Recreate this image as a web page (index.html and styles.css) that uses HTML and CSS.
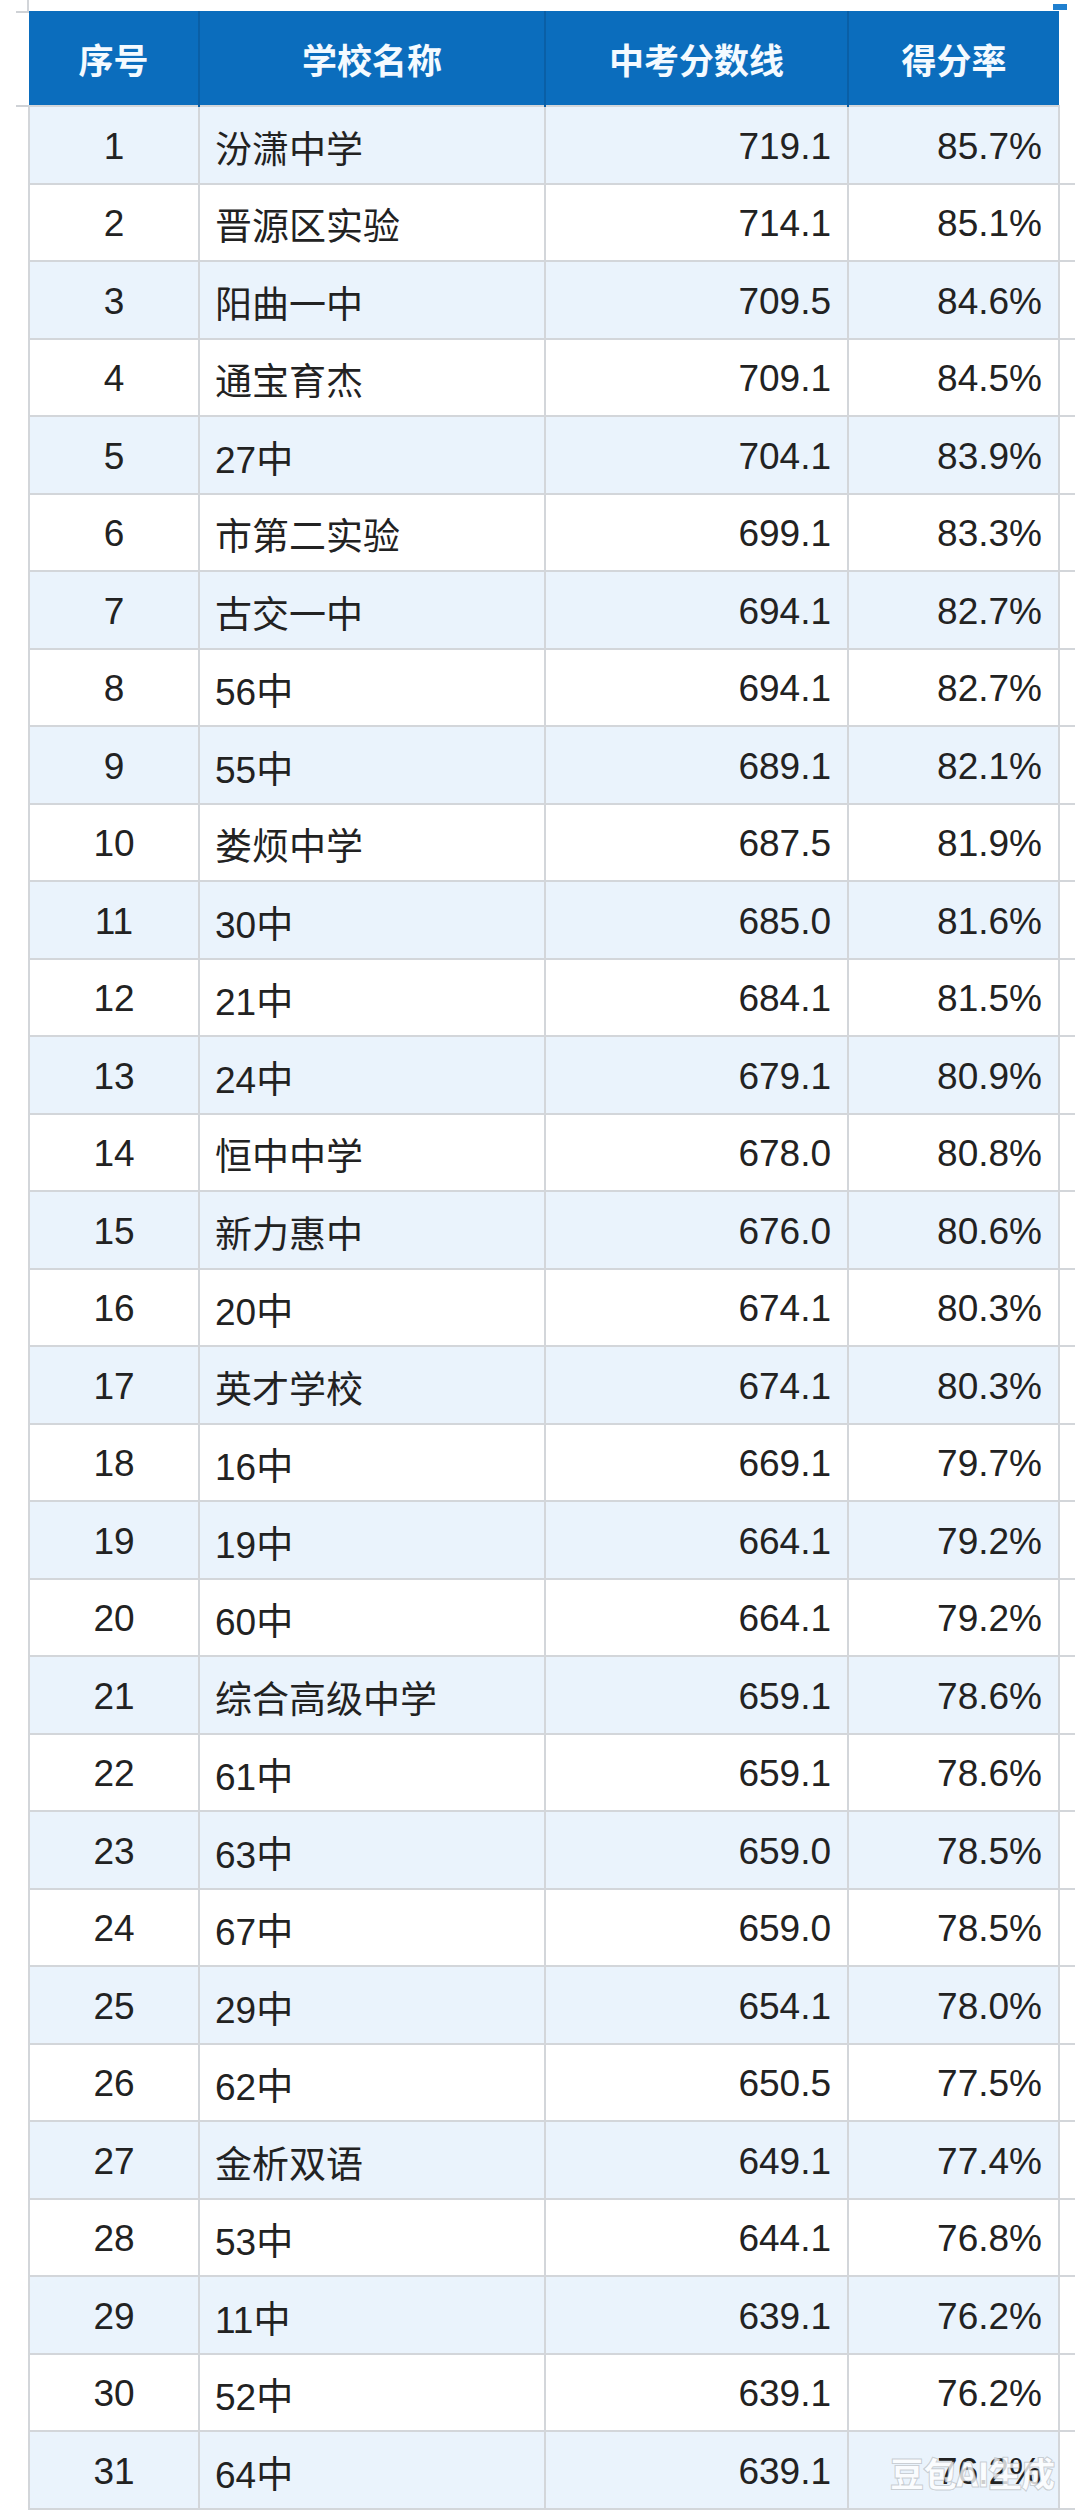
FILE: index.html
```html
<!DOCTYPE html>
<html lang="zh-CN">
<head>
<meta charset="utf-8">
<title>中考分数线</title>
<link rel="stylesheet" href="styles.css">
</head>
<body>
<div class="sheet">
  <span class="corner-mark"></span>
  <table class="score-table">
    <thead>
      <tr><th class="c-no">序号</th><th class="c-name">学校名称</th><th class="c-score">中考分数线</th><th class="c-rate">得分率</th></tr>
    </thead>
    <tbody>
      <tr><td>1</td><td>汾潇中学</td><td>719.1</td><td>85.7%</td></tr>
      <tr><td>2</td><td>晋源区实验</td><td>714.1</td><td>85.1%</td></tr>
      <tr><td>3</td><td>阳曲一中</td><td>709.5</td><td>84.6%</td></tr>
      <tr><td>4</td><td>通宝育杰</td><td>709.1</td><td>84.5%</td></tr>
      <tr><td>5</td><td>27中</td><td>704.1</td><td>83.9%</td></tr>
      <tr><td>6</td><td>市第二实验</td><td>699.1</td><td>83.3%</td></tr>
      <tr><td>7</td><td>古交一中</td><td>694.1</td><td>82.7%</td></tr>
      <tr><td>8</td><td>56中</td><td>694.1</td><td>82.7%</td></tr>
      <tr><td>9</td><td>55中</td><td>689.1</td><td>82.1%</td></tr>
      <tr><td>10</td><td>娄烦中学</td><td>687.5</td><td>81.9%</td></tr>
      <tr><td>11</td><td>30中</td><td>685.0</td><td>81.6%</td></tr>
      <tr><td>12</td><td>21中</td><td>684.1</td><td>81.5%</td></tr>
      <tr><td>13</td><td>24中</td><td>679.1</td><td>80.9%</td></tr>
      <tr><td>14</td><td>恒中中学</td><td>678.0</td><td>80.8%</td></tr>
      <tr><td>15</td><td>新力惠中</td><td>676.0</td><td>80.6%</td></tr>
      <tr><td>16</td><td>20中</td><td>674.1</td><td>80.3%</td></tr>
      <tr><td>17</td><td>英才学校</td><td>674.1</td><td>80.3%</td></tr>
      <tr><td>18</td><td>16中</td><td>669.1</td><td>79.7%</td></tr>
      <tr><td>19</td><td>19中</td><td>664.1</td><td>79.2%</td></tr>
      <tr><td>20</td><td>60中</td><td>664.1</td><td>79.2%</td></tr>
      <tr><td>21</td><td>综合高级中学</td><td>659.1</td><td>78.6%</td></tr>
      <tr><td>22</td><td>61中</td><td>659.1</td><td>78.6%</td></tr>
      <tr><td>23</td><td>63中</td><td>659.0</td><td>78.5%</td></tr>
      <tr><td>24</td><td>67中</td><td>659.0</td><td>78.5%</td></tr>
      <tr><td>25</td><td>29中</td><td>654.1</td><td>78.0%</td></tr>
      <tr><td>26</td><td>62中</td><td>650.5</td><td>77.5%</td></tr>
      <tr><td>27</td><td>金析双语</td><td>649.1</td><td>77.4%</td></tr>
      <tr><td>28</td><td>53中</td><td>644.1</td><td>76.8%</td></tr>
      <tr><td>29</td><td>11中</td><td>639.1</td><td>76.2%</td></tr>
      <tr><td>30</td><td>52中</td><td>639.1</td><td>76.2%</td></tr>
      <tr><td>31</td><td>64中</td><td>639.1</td><td>76.2%</td></tr>
    </tbody>
  </table>
  <span class="watermark">豆包AI生成</span>
</div>
</body>
</html>
```

FILE: styles.css
```css
html, body {
  margin: 0;
  padding: 0;
  background: #ffffff;
}

body {
  font-family: "Liberation Sans", "Noto Sans CJK SC", sans-serif;
  color: #222222;
}

.sheet {
  position: relative;
  width: 1080px;
  height: 2512px;
  padding: 11px 0 0 28px;
  box-sizing: border-box;
  overflow: hidden;
}

/* spreadsheet gridline above the header */
.sheet::before {
  content: "";
  position: absolute;
  left: 27px;
  top: 0;
  width: 2px;
  height: 12px;
  background: #d2d5d9;
}

.corner-mark {
  position: absolute;
  left: 1053px;
  top: 4px;
  width: 14px;
  height: 6px;
  background: #1f7fcf;
}

.score-table {
  width: 1024px;
  border-collapse: collapse;
  table-layout: fixed;
}

.c-no { width: 169px; }
.c-name { width: 344px; }
.c-score { width: 301px; }
.c-rate { width: 210px; }

.score-table th {
  height: 94px;
  padding: 0;
  background: #0b6dbd;
  color: #f4faff;
  font-family: "Noto Sans CJK SC", sans-serif;
  font-weight: 700;
  font-size: 35px;
  text-align: center;
  vertical-align: middle;
  border-left: 2px solid #0a5fa6;
  position: relative;
}

.score-table th:first-child {
  border-left: none;
}

/* gridline stubs left of the header */
.score-table th:first-child::before,
.score-table th:first-child::after {
  content: "";
  position: absolute;
  left: -13px;
  width: 13px;
  height: 2px;
  background: #cfd2d6;
}
.score-table th:first-child::before { top: 0; }
.score-table th:first-child::after { bottom: -2px; }

.score-table td {
  height: 77.5px;
  padding: 4px 16px 0 15px;
  box-sizing: border-box;
  font-size: 37px;
  font-family: "Liberation Sans", "Noto Sans CJK SC", sans-serif;
  color: #222222;
  vertical-align: middle;
  border: 2px solid #d3d6da;
  white-space: nowrap;
  position: relative;
}

.score-table td:nth-child(1) {
  text-align: center;
  padding-left: 0;
  padding-right: 0;
}

.score-table td:nth-child(2) {
  text-align: left;
}

.score-table td:nth-child(3),
.score-table td:nth-child(4) {
  text-align: right;
}

/* gridlines that run past the right edge */
.score-table td:last-child::after {
  content: "";
  position: absolute;
  right: -17px;
  bottom: -2px;
  width: 15px;
  height: 2px;
  background: #d3d6da;
}

.score-table tbody tr:nth-child(odd) td {
  background: #eaf3fc;
}

.score-table tbody tr:nth-child(even) td {
  background: #ffffff;
}

.watermark {
  position: absolute;
  left: 890px;
  top: 2448px;
  font-family: "Noto Sans CJK SC", sans-serif;
  font-weight: 900;
  font-size: 34px;
  letter-spacing: -1px;
  color: rgba(255, 255, 255, 0.78);
  -webkit-text-stroke: 1px rgba(150, 155, 160, 0.45);
}
```
